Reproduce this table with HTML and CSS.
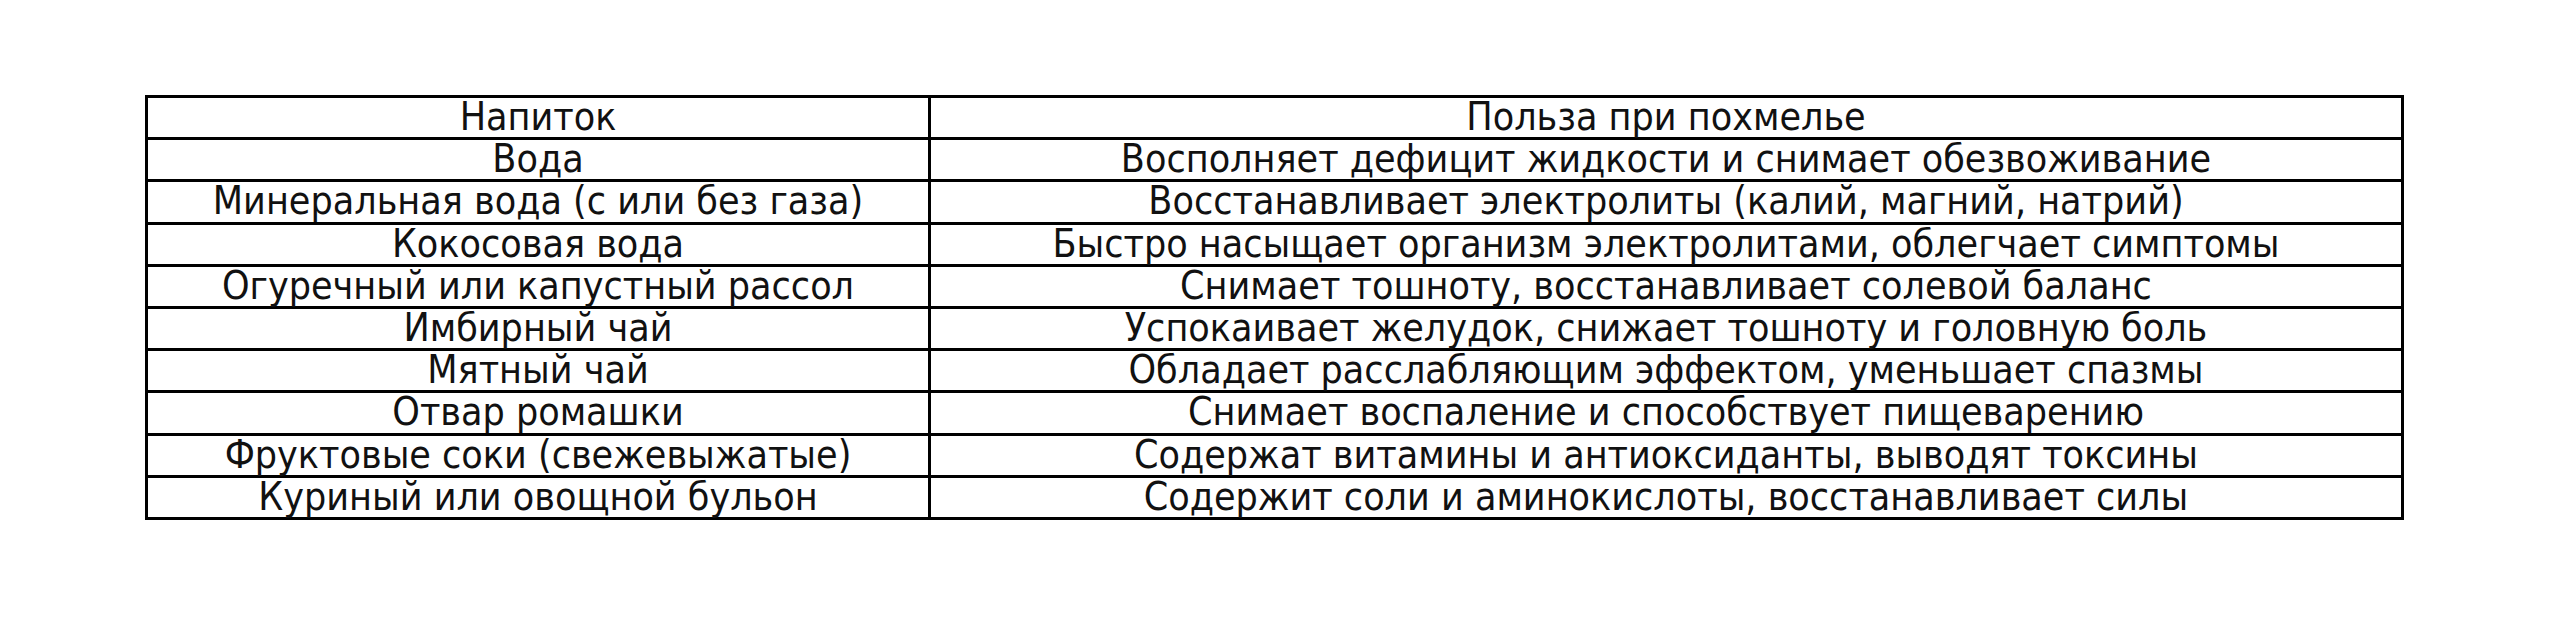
FILE: index.html
```html
<!DOCTYPE html>
<html lang="ru">
<head>
<meta charset="utf-8">
<title>Напитки при похмелье</title>
<link rel="stylesheet" href="styles.css">
</head>
<body>
<div class="page">
<table class="drinks">
<colgroup><col class="c1"><col class="c2"></colgroup>
<tr><td>Напиток</td><td>Польза при похмелье</td></tr>
<tr><td>Вода</td><td>Восполняет дефицит жидкости и снимает обезвоживание</td></tr>
<tr><td>Минеральная вода (с или без газа)</td><td>Восстанавливает электролиты (калий, магний, натрий)</td></tr>
<tr><td>Кокосовая вода</td><td>Быстро насыщает организм электролитами, облегчает симптомы</td></tr>
<tr><td>Огуречный или капустный рассол</td><td>Снимает тошноту, восстанавливает солевой баланс</td></tr>
<tr><td>Имбирный чай</td><td>Успокаивает желудок, снижает тошноту и головную боль</td></tr>
<tr><td>Мятный чай</td><td>Обладает расслабляющим эффектом, уменьшает спазмы</td></tr>
<tr><td>Отвар ромашки</td><td>Снимает воспаление и способствует пищеварению</td></tr>
<tr><td>Фруктовые соки (свежевыжатые)</td><td>Содержат витамины и антиоксиданты, выводят токсины</td></tr>
<tr><td>Куриный или овощной бульон</td><td>Содержит соли и аминокислоты, восстанавливает силы</td></tr>
</table>
</div>
</body>
</html>
```
FILE: styles.css
```css
html, body {
  margin: 0;
  padding: 0;
  background: #fff;
}
.page {
  padding: 95px 0 0 145px;
}
.drinks {
  border-collapse: collapse;
  width: 2259px;
  table-layout: fixed;
  font-family: "DejaVu Sans Condensed", "DejaVu Sans", sans-serif;
  font-size: 39px;
  color: #111;
}
.c1 { width: 783px; }
.drinks tr { height: 42.2px; }
.drinks td {
  border: 3px solid #000;
  padding: 0 0 1px;
  text-align: center;
  vertical-align: middle;
  line-height: 36px;
  white-space: nowrap;
}
```
